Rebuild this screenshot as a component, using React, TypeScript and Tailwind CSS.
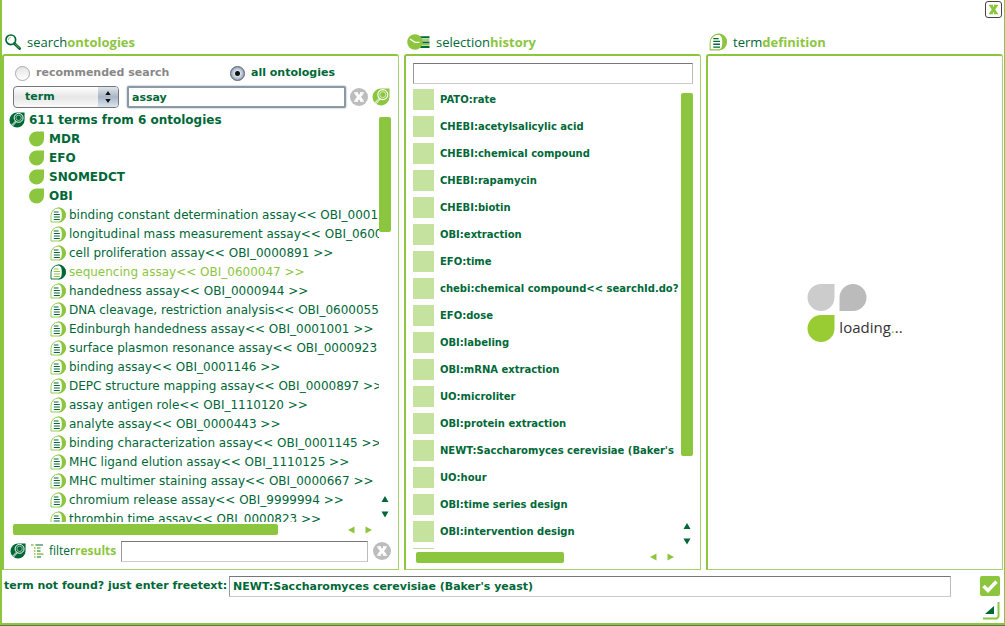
import React from "react";

const results = [
  "binding constant determination assay<< OBI_0001146 >>",
  "longitudinal mass measurement assay<< OBI_0600052 >>",
  "cell proliferation assay<< OBI_0000891 >>",
  "sequencing assay<< OBI_0600047 >>",
  "handedness assay<< OBI_0000944 >>",
  "DNA cleavage, restriction analysis<< OBI_0600055 >>",
  "Edinburgh handedness assay<< OBI_0001001 >>",
  "surface plasmon resonance assay<< OBI_0000923 >>",
  "binding assay<< OBI_0001146 >>",
  "DEPC structure mapping assay<< OBI_0000897 >>",
  "assay antigen role<< OBI_1110120 >>",
  "analyte assay<< OBI_0000443 >>",
  "binding characterization assay<< OBI_0001145 >>",
  "MHC ligand elution assay<< OBI_1110125 >>",
  "MHC multimer staining assay<< OBI_0000667 >>",
  "chromium release assay<< OBI_9999994 >>",
  "thrombin time assay<< OBI_0000823 >>",
];

const history = [
  "PATO:rate",
  "CHEBI:acetylsalicylic acid",
  "CHEBI:chemical compound",
  "CHEBI:rapamycin",
  "CHEBI:biotin",
  "OBI:extraction",
  "EFO:time",
  "chebi:chemical compound<< searchId.do?",
  "EFO:dose",
  "OBI:labeling",
  "OBI:mRNA extraction",
  "UO:microliter",
  "OBI:protein extraction",
  "NEWT:Saccharomyces cerevisiae (Baker's",
  "UO:hour",
  "OBI:time series design",
  "OBI:intervention design",
];

const GREEN = "#8cc63f";
const DARK = "#006837";

function MagnifierIcon() {
  return (
    <svg width="16" height="16" viewBox="0 0 16 16" fill="none">
      <circle cx="5.8" cy="5.8" r="4.800" stroke={DARK} strokeWidth="1.700" />
      <path d="M3.300 6A2.600 2.600 0 0 1 6 3.300" stroke={GREEN} strokeWidth=".8" />
      <path d="M9.400 9.400l5.200 5.200" stroke={DARK} strokeWidth="2.800" strokeLinecap="round" />
      <path d="M10 9.800l4.400 4.400" stroke={GREEN} strokeWidth=".8" />
    </svg>
  );
}

function HistoryIcon() {
  return (
    <svg width="23" height="16" viewBox="0 0 23 16" fill="none">
      <path d="M12 3.300h10.500M12 8.500h10.500M12 13h10.500" stroke={DARK} strokeWidth="2" />
      <path d="M12 6h10.500M12 10.800h10.500" stroke={GREEN} strokeWidth="1.400" />
      <circle cx="8" cy="8" r="7.800" fill={GREEN} />
      <path d="M3 5l5 3.300h4.500" stroke="#fff" strokeWidth="1.300" />
    </svg>
  );
}

function DocIcon({ size, active = false }: { size: number; active?: boolean }) {
  const edge = active ? DARK : GREEN;
  const line = active ? GREEN : DARK;
  return (
    <svg width={size} height={size} viewBox="0 0 16 16" className="shrink-0" fill="none">
      <path d="M8.500 1a7 7 0 0 1 0 14H1V8.500A7.500 7.500 0 0 1 8.500 1z" fill="#fff" stroke={edge} strokeWidth=".9" />
      <path d="M8.500.6a7.400 7.400 0 0 1 0 14.800H8.200c3-1.400 3.600-3.400 3.600-7.400S11 2 7.500.8z" fill={edge} />
      <path d="M3.800 5h4.700M3.800 7.500h6M3.800 10h6M3.800 12.500h6" stroke={line} strokeWidth="1.200" />
    </svg>
  );
}

function LeafIcon() {
  return (
    <svg width="16" height="16" viewBox="0 0 16 16" className="shrink-0">
      <path d="M7.500.5H15V8A7.500 7.500 0 1 1 7.500.5z" fill={GREEN} />
    </svg>
  );
}

function LeafSearchIcon({ size, color }: { size: number; color: string }) {
  return (
    <svg width={size} height={size} viewBox="0 0 18 18" fill="none" className="shrink-0">
      <path d="M9 .5h8.500V9A8.500 8.500 0 1 1 9 .5z" fill={color} />
      <circle cx="10.800" cy="6.600" r="5" stroke="#fff" strokeWidth="1.100" />
      <circle cx="10.800" cy="6.600" r="3" stroke="#fff" strokeWidth=".6" />
      <path d="M7.300 10.200l-5 5.300M8.300 11l-4.300 4.800" stroke="#fff" strokeWidth="1" />
    </svg>
  );
}

function FilterListIcon() {
  return (
    <svg width="13" height="16" viewBox="0 0 13 16" fill="none">
      <path d="M0 2h2.500M3 5h1.500M3 8h1.500M3 11h1.500M3 14h1.500" stroke={GREEN} strokeWidth="1.500" />
      <path d="M4.500 2h7.500M6 8h3.500M6 14h4" stroke={DARK} strokeWidth="1.200" />
      <path d="M6 5h3.500M6 11h6.500" stroke={GREEN} strokeWidth="1.400" />
    </svg>
  );
}

function ClearIcon() {
  return (
    <svg width="18" height="18" viewBox="0 0 18 18" fill="none">
      <circle cx="9" cy="9" r="9" fill="#bdbdbd" />
      <path d="M5.800 5.300l6.400 7.400M12.200 5.300l-6.400 7.400" stroke="#fff" strokeWidth="3" />
      <path d="M4 4.800h4M10 4.800h4M4 13.200h4M10 13.200h4" stroke="#fff" strokeWidth="1.200" />
    </svg>
  );
}

function VerticalArrows() {
  return (
    <svg width="8" height="22" viewBox="0 0 8 22" fill={DARK} className="shrink-0">
      <path d="M4 0l3.500 6h-7zM4 21.500l3.500-6h-7z" />
    </svg>
  );
}

function HorizontalArrows() {
  return (
    <svg width="24" height="8" viewBox="0 0 24 8" fill={GREEN} className="shrink-0">
      <path d="M0 4l6.500-3.500v7zM24 4l-6.500-3.500v7z" />
    </svg>
  );
}

function Title({ icon, first, second }: { icon: React.ReactNode; first: string; second: string }) {
  return (
    <h2 className="flex h-5 items-center gap-1.5 pl-[3px] font-['Open_Sans',sans-serif] text-[13px] leading-5 text-[#006837]">
      {icon}
      <span>
        {first}
        <b className="text-[#8cc63f]">{second}</b>
      </span>
    </h2>
  );
}

const panel =
  "flex min-h-0 flex-1 flex-col overflow-hidden rounded-t-[3px] border-t-2 border-r border-b border-l-2 border-t-[#8cc63f] border-r-[#a5d36a] border-b-[#a5d36a] border-l-[#8cc63f] bg-white";
const field =
  "min-w-0 border border-t-[#777] border-r-[#bbb] border-b-[#ccc] border-l-[#999] bg-white px-[3px] font-bold text-[#006837] outline-none";
const radio =
  "size-[15px] appearance-none rounded-full border border-[#aaa] bg-linear-to-b from-[#e4e4e4] to-white checked:border-[#56616e] checked:bg-[radial-gradient(circle,#111_0_2px,#d8e2ee_3px,#8d9bac_7px)]";

export default function App() {
  return (
    <div className="flex h-screen flex-col bg-[#66764f] pb-px font-['DejaVu_Sans',sans-serif] text-[11px] text-[#006837]">
      <main className="flex min-h-0 flex-1 flex-col border-r border-b-2 border-l-2 border-[#8cc63f] bg-white">
        <div className="flex h-8 shrink-0 justify-end p-px pr-0.5">
          <button aria-label="Close" className="flex size-[17px] items-center justify-center rounded-[3px] border border-[#444] bg-white">
            <svg width="11" height="11" viewBox="0 0 11 11" fill="none" stroke={GREEN}>
              <path d="M2.800 1.500l5.400 8M8.200 1.500l-5.400 8" strokeWidth="3" />
              <path d="M1 1.300h4M6 1.300h4M1 9.700h4M6 9.700h4" strokeWidth="1.200" />
            </svg>
          </button>
        </div>

        <div className="grid min-h-0 flex-1 grid-cols-[minmax(0,4fr)_minmax(0,3fr)_minmax(0,3fr)] gap-[5px] px-px">
          <section className="-ml-px flex min-h-0 flex-col gap-0.5">
            <Title icon={<MagnifierIcon />} first="search" second="ontologies" />
            <div className={panel}>
              <div className="flex h-7 shrink-0 items-center pt-1.5 pl-[11px] font-bold">
                <label className="flex w-[215px] items-center gap-1.5 text-[#888]">
                  <input type="radio" name="scope" className={radio} />
                  recommended search
                </label>
                <label className="flex items-center gap-1.5">
                  <input type="radio" name="scope" defaultChecked className={radio} />
                  all ontologies
                </label>
              </div>
              <div className="flex h-[26px] shrink-0 items-center gap-1 pr-2 pl-[9px]">
                <div className="relative mr-1 w-[106px] shrink-0">
                  <select
                    aria-label="Search field"
                    className="block h-[22px] w-full appearance-none rounded-[4px] border border-[#777] bg-linear-to-b from-white via-[#e6e6e6] to-[#fafafa] pl-[11px] text-[11px] font-bold"
                  >
                    <option>term</option>
                  </select>
                  <span className="pointer-events-none absolute inset-y-px right-px flex w-5 items-center justify-center rounded-r-[3px] bg-linear-to-b from-[#dfe6ee] via-[#a9b6c6] to-[#dbe5f0]">
                    <svg width="6" height="12" viewBox="0 0 6 12" fill="#111">
                      <path d="M3 0l2.700 4H.3zM3 12l2.700-4H.3z" />
                    </svg>
                  </span>
                </div>
                <input
                  aria-label="Search term"
                  defaultValue="assay"
                  className="h-[22px] min-w-0 flex-1 rounded-[2px] border-2 border-[#8b98a5] bg-white px-[3px] font-bold shadow-[0_0_2px_#8b98a5] outline-none"
                />
                <button aria-label="Clear search"><ClearIcon /></button>
                <button aria-label="Search"><LeafSearchIcon size={18} color={GREEN} /></button>
              </div>

              <div className="flex min-h-0 flex-1 pr-[7px] pl-[5px] text-[12px]">
                <ul className="min-h-0 min-w-0 flex-1 overflow-hidden whitespace-nowrap [&_button]:flex [&_button]:h-[19px] [&_button]:items-center">
                  <li>
                    <button className="gap-1 font-bold">
                      <LeafSearchIcon size={16} color={DARK} />
                      611 terms from 6 ontologies
                    </button>
                  </li>
                  {["MDR", "EFO", "SNOMEDCT", "OBI"].map((name) => (
                    <li key={name} className="pl-5">
                      <button className="gap-1 font-bold"><LeafIcon />{name}</button>
                    </li>
                  ))}
                  {results.map((name) => {
                    const active = name.startsWith("sequencing");
                    return (
                      <li key={name} className={active ? "pl-[41px] text-[#8cc63f]" : "pl-[41px]"}>
                        <button className="gap-[3px]"><DocIcon size={16} active={active} />{name}</button>
                      </li>
                    );
                  })}
                </ul>
                <div className="flex w-3 shrink-0 flex-col items-center justify-between pt-[7px] pb-1">
                  <div className="h-[115px] w-full rounded-[2px] bg-[#8cc63f]" />
                  <VerticalArrows />
                </div>
              </div>

              <div className="flex h-[15px] shrink-0 items-center justify-between pr-[26px] pl-[9px]">
                <div className="h-[11px] w-[265px] rounded-[2px] bg-[#8cc63f]" />
                <HorizontalArrows />
              </div>
              <div className="flex h-8 shrink-0 items-center gap-[5px] pt-0.5 pr-[7px] pb-1.5 pl-1.5">
                <LeafSearchIcon size={16} color={DARK} />
                <FilterListIcon />
                <label htmlFor="filter" className="font-['Open_Sans',sans-serif] text-[12px]">
                  filter<b className="text-[#8cc63f]">results</b>
                </label>
                <input id="filter" className={`${field} h-[21px] flex-1`} />
                <button aria-label="Clear filter"><ClearIcon /></button>
              </div>
            </div>
          </section>

          <section className="flex min-h-0 flex-col gap-0.5">
            <Title icon={<HistoryIcon />} first="selection" second="history" />
            <div className={panel}>
              <div className="flex shrink-0 px-[7px] pt-[7px]">
                <input aria-label="Search history" className={`${field} h-[21px] flex-1`} />
              </div>
              <div className="flex min-h-0 flex-1 pt-[5px] pr-[7px] pl-[7px]">
                <ul className="min-h-0 min-w-0 flex-1 overflow-hidden text-[10px] font-bold whitespace-nowrap">
                  {history.map((name) => (
                    <li key={name}>
                      <button className="flex h-[27px] items-start gap-1.5">
                        <span className="size-[21px] shrink-0 bg-[#c5e39f]" />
                        <span className="leading-[21px]">{name}</span>
                      </button>
                    </li>
                  ))}
                  <li aria-hidden="true" className="h-px w-[21px] bg-[#c5e39f]" />
                </ul>
                <div className="flex w-3 shrink-0 flex-col items-center justify-between pt-1 pb-1">
                  <div className="h-[363px] w-full rounded-[2px] bg-[#8cc63f]" />
                  <VerticalArrows />
                </div>
              </div>
              <div className="flex h-5 shrink-0 items-center justify-between pr-[26px] pb-1 pl-2.5">
                <div className="h-[11px] w-[148px] rounded-[2px] bg-[#8cc63f]" />
                <HorizontalArrows />
              </div>
            </div>
          </section>

          <section className="flex min-h-0 flex-col gap-0.5">
            <Title icon={<DocIcon size={18} />} first="term" second="definition" />
            <div className={`${panel} items-center justify-center`}>
              <div className="flex items-end" role="status">
                <svg width="60" height="60" viewBox="0 0 60 60">
                  <path d="M14 1h13.500v13.500A13.500 13.500 0 1 1 14 1z" fill="#ccc" />
                  <path d="M46 1a13.500 13.500 0 0 1 0 27H32.500V14.500A13.500 13.500 0 0 1 46 1z" fill="#bbb" />
                  <path d="M14 32h13.500v13.500A13.500 13.500 0 1 1 14 32z" fill="#9c3" />
                </svg>
                <span className="-ml-7 pb-1 font-['Open_Sans',sans-serif] text-[15px] text-[#333]">
                  loading<span className="text-[#9c3]">.</span>..
                </span>
              </div>
            </div>
          </section>
        </div>

        <div className="flex h-8 shrink-0 items-center gap-0.5 pr-1 pl-0.5">
          <label htmlFor="freetext" className="font-bold">term not found? just enter freetext:</label>
          <input
            id="freetext"
            defaultValue="NEWT:Saccharomyces cerevisiae (Baker's yeast)"
            className={`${field} mr-[27px] h-[21px] flex-1`}
          />
          <button aria-label="Accept" className="flex size-5 items-center justify-center rounded-[2px] bg-[#8cc63f]">
            <svg width="16" height="14" viewBox="0 0 16 14" fill="none" stroke="#fff" strokeWidth="3.500">
              <path d="M1.500 7l4.500 4.500L14.500 2.500" />
            </svg>
          </button>
        </div>
        <div className="flex h-[21px] shrink-0 justify-end pr-1">
          <svg width="18" height="18" viewBox="0 0 18 18">
            <path d="M12 4v8H3z" fill={DARK} />
            <path d="M16.500 0v14.500l-1.500 2H1" fill="none" stroke={GREEN} strokeWidth="2" />
          </svg>
        </div>
      </main>
    </div>
  );
}
